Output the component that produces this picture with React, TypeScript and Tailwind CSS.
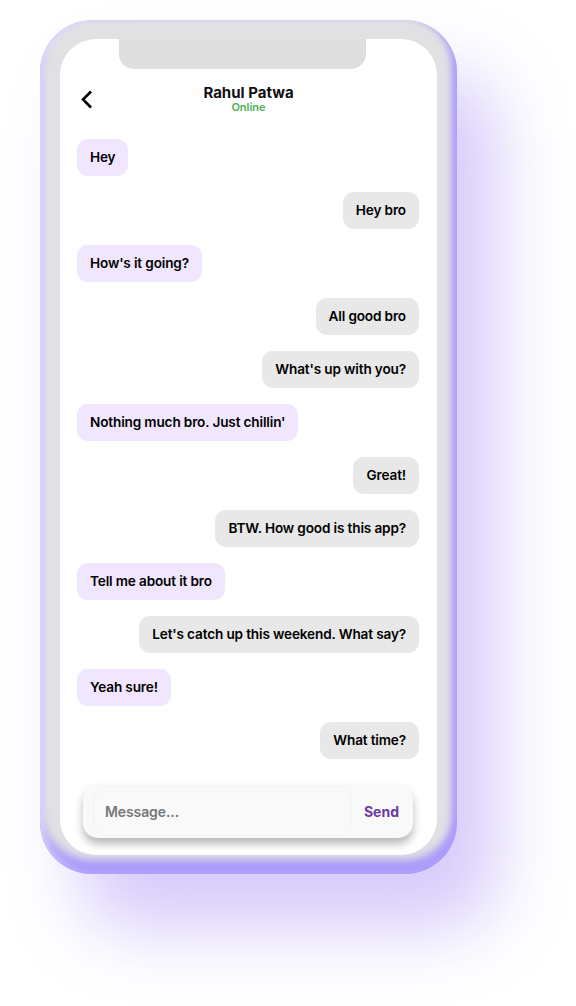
import React from "react";

type Msg = { text: string; mine: boolean };

const messages: Msg[] = [
  { text: "Hey", mine: false },
  { text: "Hey bro", mine: true },
  { text: "How's it going?", mine: false },
  { text: "All good bro", mine: true },
  { text: "What's up with you?", mine: true },
  { text: "Nothing much bro. Just chillin'", mine: false },
  { text: "Great!", mine: true },
  { text: "BTW. How good is this app?", mine: true },
  { text: "Tell me about it bro", mine: false },
  { text: "Let's catch up this weekend. What say?", mine: true },
  { text: "Yeah sure!", mine: false },
  { text: "What time?", mine: true },
];

const Bubble: React.FC<Msg> = ({ text, mine }) => (
  <div className={mine ? "flex justify-end" : "flex justify-start"}>
    <div
      className={
        "h-[37px] flex items-center px-[13px] rounded-[11px] text-[13.6px] tracking-[-0.15px] font-semibold text-black " +
        (mine ? "bg-[#e8e8e8]" : "bg-[#f0e7fe]")
      }
    >
      {text}
    </div>
  </div>
);

const App: React.FC = () => {
  return (
    <div
      className="min-h-screen w-full bg-white pl-[40px] pt-[20px] overflow-hidden"
      style={{ fontFamily: "Inter, 'Liberation Sans', sans-serif" }}
    >
      <div className="w-[417px] h-[854px] rounded-[52px] bg-[#e1e1e3] px-[20px] pt-[19px] shadow-[inset_-5px_-4px_7px_#ad9cfb,inset_4px_0_6px_#ddd6fb,inset_0_-14px_10px_#a897fb,40px_55px_70px_rgba(160,130,245,0.42)]">
        <div className="h-[816px] rounded-[36px] bg-white flex flex-col overflow-hidden">
          <div className="ml-[59px] w-[247px] h-[30px] shrink-0 rounded-b-[15px] bg-[#dedede]" />

          <div className="grid grid-cols-[1fr_auto_1fr] items-center mt-[15px] px-[20px]">
            <svg width="13" height="19" viewBox="0 0 13 19" className="mt-[2px]">
              <polyline
                points="11,1.5 3,9.5 11,17.5"
                fill="none"
                stroke="#000"
                strokeWidth="2.6"
              />
            </svg>
            <div className="flex flex-col items-center">
              <span className="text-[15px] leading-[17px] font-bold text-[#111]">
                Rahul Patwa
              </span>
              <span className="text-[11px] leading-[12px] font-semibold text-[#4caf50]">
                Online
              </span>
            </div>
            <div />
          </div>

          <div className="flex flex-col gap-[16px] mt-[26px] pl-[17px] pr-[18px]">
            {messages.map((m, i) => (
              <Bubble key={i} {...m} />
            ))}
          </div>

          <div className="mt-[25px] ml-[23px] w-[330px] h-[54px] shrink-0 rounded-[15px] bg-[#f9f9f9] shadow-[0_6px_8px_rgba(0,0,0,0.28)] flex items-center pl-[10px] pr-[14px]">
            <div className="flex-1 h-[50px] rounded-[14px] border border-[#f3f3f3] flex items-center pl-[11px] text-[14px] tracking-[-0.1px] font-semibold text-[#777]">
              Message...
            </div>
            <span className="ml-[12px] text-[14px] font-bold text-[#6b3aa0]">Send</span>
          </div>
        </div>
      </div>
    </div>
  );
};

export default App;
